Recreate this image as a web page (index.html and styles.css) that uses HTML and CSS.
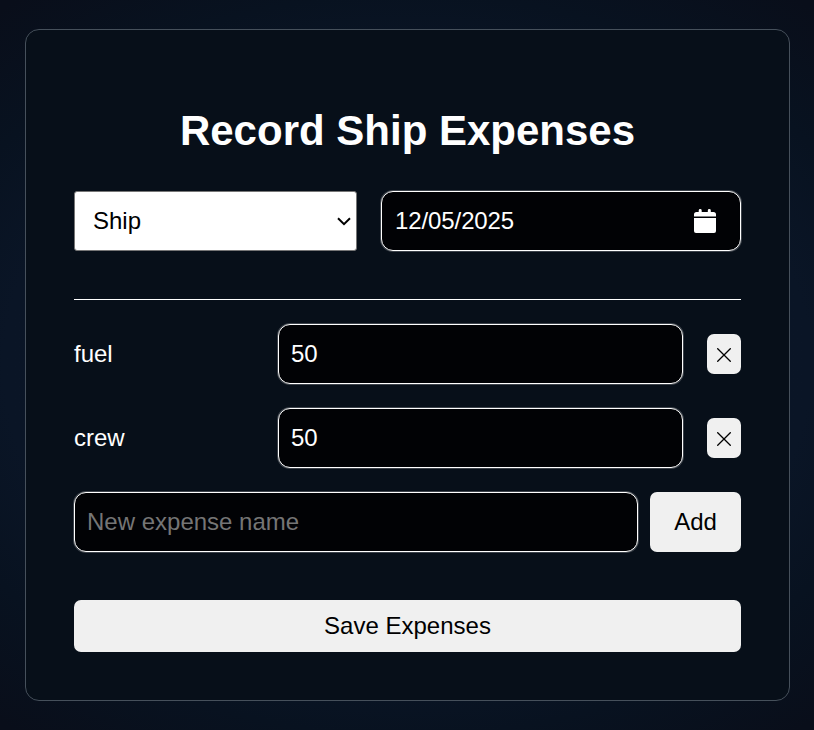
FILE: index.html
```html
<!DOCTYPE html>
<html lang="en">
<head>
    <meta charset="UTF-8">
    <meta name="viewport" content="width=device-width, initial-scale=1.0">
    <title>Record Ship Expenses</title>
    <link rel="stylesheet" href="styles.css">
</head>
<body>
    <form class="card">
        <h1>Record Ship Expenses</h1>

        <div class="top-row">
            <div class="select-wrap">
                <select class="ship-select">
                    <option>Ship</option>
                </select>
                <svg class="chevron" width="14" height="9" viewBox="0 0 14 9">
                    <path d="M1 1.2 L7 7.2 L13 1.2" fill="none" stroke="#000" stroke-width="2"/>
                </svg>
            </div>
            <div class="field date-field">
                <span>12/05/2025</span>
                <svg class="calendar" width="22" height="24" viewBox="0 0 22 24">
                    <path d="M0 7.500V5.500Q0 3 2.500 3H4.700V1.400a1.500 1.400 0 0 1 3 0V3H13.800V1.400a1.500 1.400 0 0 1 3 0V3H19.500Q22 3 22 5.500V7.500H0Z" fill="#fff"/>
                    <path d="M0 9H22V22Q22 24 20 24H2Q0 24 0 22Z" fill="#fff"/>
                </svg>
            </div>
        </div>

        <hr>

        <div class="expense-row">
            <label for="fuel">fuel</label>
            <input class="field" id="fuel" type="text" value="50">
            <button type="button" class="btn remove" aria-label="Remove fuel">
                <svg width="14" height="14" viewBox="0 0 14 14">
                    <path d="M0.300 0.300 L13.700 13.700 M13.700 0.300 L0.300 13.700" stroke="#000" stroke-width="1.300"/>
                </svg>
            </button>
        </div>
        <div class="expense-row">
            <label for="crew">crew</label>
            <input class="field" id="crew" type="text" value="50">
            <button type="button" class="btn remove" aria-label="Remove crew">
                <svg width="14" height="14" viewBox="0 0 14 14">
                    <path d="M0.300 0.300 L13.700 13.700 M13.700 0.300 L0.300 13.700" stroke="#000" stroke-width="1.300"/>
                </svg>
            </button>
        </div>

        <div class="add-row">
            <input class="field" type="text" placeholder="New expense name">
            <button type="button" class="btn add">Add</button>
        </div>

        <button type="button" class="btn save">Save Expenses</button>
    </form>
</body>
</html>
```
FILE: styles.css
```css
* {
    box-sizing: border-box;
}

body {
    margin: 0;
    height: 730px;
    padding: 29px 24px 0 25px;
    overflow: hidden;
    font-family: "Liberation Sans", Arial, sans-serif;
    font-size: 24px;
    color: #fff;
    background: radial-gradient(75% 62% at 50% 50%, #0b1629 0%, #0a1526 66%, #081220 82%, #090e1a 103%);
}

.card {
    display: flex;
    flex-direction: column;
    height: 672px;
    padding: 77px 48px 48px;
    border: 1px solid #46505b;
    border-radius: 14px;
    background: #070f19;
}

h1 {
    margin: 0 0 36px;
    font-size: 42px;
    line-height: 48px;
    text-align: center;
}

input,
select,
button {
    margin: 0;
    font: inherit;
}

.field {
    height: 60px;
    min-width: 0;
    padding: 0 12px;
    border: 1px solid #fff;
    border-radius: 12px;
    box-shadow: 0 0 0 1px rgba(255, 255, 255, 0.22);
    background: #010205;
    color: #fff;
    outline: none;
}

.field::placeholder {
    color: #757575;
    opacity: 1;
}

/* ship + date */
.top-row {
    display: flex;
    gap: 24px;
}

.select-wrap {
    position: relative;
    width: 283px;
}

.ship-select {
    appearance: none;
    display: block;
    width: 100%;
    height: 60px;
    padding: 0 18px 2px;
    border: 1px solid #767676;
    border-radius: 3px;
    background: #fff;
    color: #000;
}

.chevron {
    position: absolute;
    top: 26px;
    right: 6px;
}

.date-field {
    flex: 1;
    display: flex;
    align-items: center;
    justify-content: space-between;
    padding: 0 24px 0 13px;
    letter-spacing: -0.1px;
}

hr {
    width: 100%;
    height: 1px;
    margin: 48px 0 24px;
    border: 0;
    background: #fff;
}

/* expenses */
.expense-row {
    display: flex;
    align-items: center;
    margin-bottom: 24px;
}

.expense-row label {
    width: 204px;
}

.expense-row .field {
    flex: 1;
    margin-right: 24px;
}

.btn {
    padding: 0;
    border: 0;
    border-radius: 7px;
    background: #f0f0f0;
    color: #000;
}

.remove {
    display: flex;
    align-items: center;
    justify-content: center;
    width: 34px;
    height: 40px;
    padding-top: 2px;
}

.add-row {
    display: flex;
    gap: 12px;
    margin-bottom: 48px;
}

.add-row .field {
    flex: 1;
}

.add {
    width: 91px;
}

.save {
    height: 52px;
}
```
